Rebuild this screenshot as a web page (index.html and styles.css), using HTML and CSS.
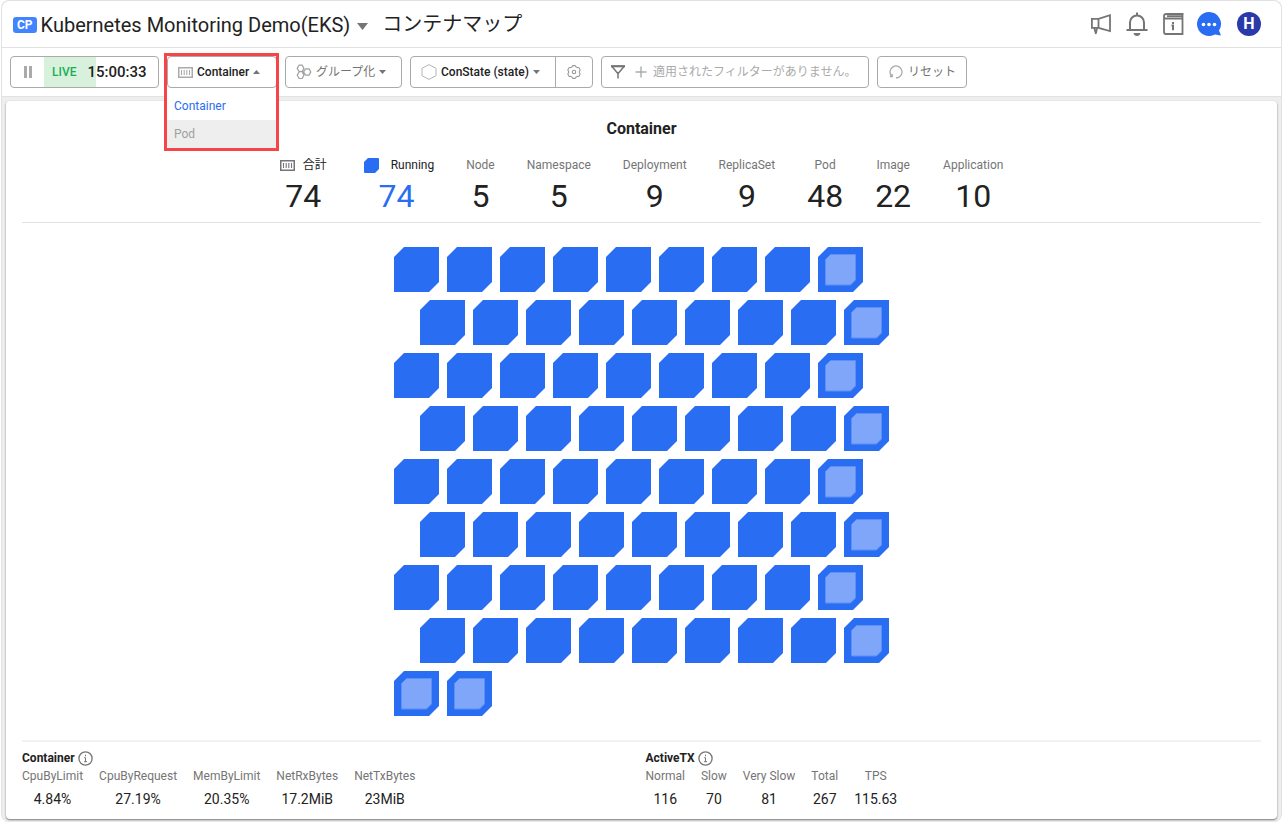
FILE: index.html
```html
<!DOCTYPE html>
<html lang="ja">
<head>
<meta charset="utf-8">
<meta name="viewport" content="width=device-width, initial-scale=1">
<title>コンテナマップ</title>
<link rel="stylesheet" href="styles.css">
</head>
<body>
<svg class="symbols" aria-hidden="true">
  <symbol id="container-icon" viewBox="0 0 15 11">
    <path d="M.75.75h13.5v9.5H.75z" fill="none" stroke="currentColor" stroke-width="1.5"/>
    <path d="M3.5 3v5M6.2 3v5M8.8 3v5M11.5 3v5" stroke="currentColor" stroke-width="1.1"/>
  </symbol>
  <symbol id="info-icon" viewBox="0 0 15 15">
    <circle cx="7.500" cy="7.500" r="6.600" fill="none" stroke="currentColor" stroke-width="1.300"/>
    <path d="M7.500 3.700v1.500M6.200 6.700h1.300v4M6 10.700h3" fill="none" stroke="currentColor"/>
  </symbol>
  <symbol id="tile" viewBox="0 0 45 45">
    <path d="M10 0h35v35L35 45H0V10z" fill="#296df2"/>
  </symbol>
  <symbol id="tile-recent" viewBox="0 0 45 45">
    <path d="M10 0h35v35L35 45H0V10z" fill="#296df2"/>
    <path d="M12.500 7.500h25v25.500l-5 5h-25V12.500z" fill="#7fa6f8" stroke="#5d8ff6" stroke-width="1"/>
  </symbol>
</svg>

<div class="window">
  <header class="topbar">
    <span class="badge">CP</span>
    <button class="project" type="button">Kubernetes Monitoring Demo(EKS)
      <svg width="11" height="7" viewBox="0 0 11 7" aria-hidden="true"><path d="M0 0h11L5.500 7z" fill="#757575"/></svg>
    </button>
    <h1 class="title">コンテナマップ</h1>
    <nav class="actions">
      <button class="icon-button" type="button" aria-label="お知らせ">
        <svg width="24" height="24" viewBox="0 0 24 24" fill="none" stroke="#757575" stroke-width="1.800"><path d="M2.900 6.900h6.600L21 3.200v15.900L9.500 15.800H2.900zM9.500 7v8.800M5.200 16l1.800 6M8 16l-1 5"/></svg>
      </button>
      <button class="icon-button" type="button" aria-label="通知">
        <svg width="24" height="24" viewBox="0 0 24 24" fill="none" stroke="#757575" stroke-width="2"><path d="M1.500 18h21M5 18v-7.500a7 7 0 0 1 14 0V18M12 .5v3"/><path d="M8.500 21h7c-.3 2-1.700 3-3.500 3s-3.200-1-3.500-3z" fill="#757575" stroke="none"/></svg>
      </button>
      <button class="icon-button" type="button" aria-label="ガイド">
        <svg width="24" height="24" viewBox="0 0 24 24" fill="none" stroke="#757575" stroke-width="1.800"><path d="M22.500 2H5.500C4 2 3 2.800 3 4.300V20a2 2 0 0 0 2 2h16.500V6.500H4.500A1.500 1.500 0 0 1 3 5M6 4.200h15.500M21.500 2v4.500"/><path d="M12 10v2M10.500 13.500H12v4.700" stroke-width="2"/></svg>
      </button>
      <button class="icon-button" type="button" aria-label="チャット">
        <svg width="24" height="24" viewBox="0 0 24 24"><path d="M12 0a12 12 0 1 0 6 22.400l6 1.200-2-5.100A12 12 0 0 0 12 0z" fill="#296df2"/><g fill="#fff"><circle cx="6.500" cy="12.500" r="1.800"/><circle cx="12" cy="12.500" r="1.800"/><circle cx="17.500" cy="12.500" r="1.800"/></g></svg>
      </button>
      <button class="avatar" type="button" aria-label="アカウント H">H</button>
    </nav>
  </header>

  <div class="toolbar">
    <div class="control live">
      <button class="pause" type="button" aria-label="一時停止">
        <svg width="8" height="12" viewBox="0 0 8 12"><path d="M0 0h3v12H0zM5 0h3v12H5z" fill="#aaa"/></svg>
      </button>
      <span class="live-label">LIVE</span>
      <time class="clock">15:00:33</time>
    </div>

    <div class="picker">
      <button class="control picker-button" type="button" aria-haspopup="listbox" aria-expanded="true">
        <svg class="light" width="15" height="11" aria-hidden="true"><use href="#container-icon"/></svg>
        Container
        <svg class="caret" width="7" height="4" viewBox="0 0 7 4" aria-hidden="true"><path d="M0 4h7L3.500 0z" fill="#757575"/></svg>
      </button>
      <ul class="picker-menu" role="listbox" aria-label="リソース">
        <li class="option selected" role="option" aria-selected="true">Container</li>
        <li class="option hovered" role="option" aria-selected="false">Pod</li>
      </ul>
      <div class="highlight"></div>
    </div>

    <button class="control group" type="button">
      <svg width="16" height="16" viewBox="0 0 16 16" fill="none" stroke="#a0a0a0" stroke-width="1.200" aria-hidden="true"><path d="M3.200 1.200h3l1.700 3-1.700 3.400h-3l-2-3.400zM3.200 7.600h3l1.700 3.600-1.700 3.300h-3l-2-3.300zM9.600 4.900h3.400l1.800 3-1.800 3.200H9.600L7.500 7.900z"/></svg>
      グループ化
      <svg class="caret" width="7" height="4" viewBox="0 0 7 4" aria-hidden="true"><path d="M0 0h7L3.500 4z" fill="#757575"/></svg>
    </button>

    <div class="control state">
      <button class="state-button" type="button">
        <svg width="16" height="16" viewBox="0 0 16 16" fill="none" stroke="#b5b5b5" aria-hidden="true"><path d="M8 .6l7 3.700v7.400l-7 3.700-7-3.700V4.300z"/></svg>
        ConState (state)
        <svg class="caret" width="7" height="4" viewBox="0 0 7 4" aria-hidden="true"><path d="M0 0h7L3.500 4z" fill="#757575"/></svg>
      </button>
      <button class="settings" type="button" aria-label="設定">
        <svg width="14" height="14" viewBox="0 0 14 14" fill="none" stroke="#999" stroke-width="1.100" stroke-linejoin="round"><path d="M5 1.900Q5.300.6 6 .6h2q.7 0 1 1.300l1.300.7q1.300-.4 1.700.2l1 1.700q.4.700-.6 1.600v1.800q1 .9.600 1.600l-1 1.700q-.4.600-1.700.2L9 12.100q-.3 1.300-1 1.300H6q-.7 0-1-1.300l-1.300-.7q-1.300.4-1.700-.2L1 9.500q-.4-.7.600-1.600V6.100Q.6 5.200 1 4.500l1-1.700q.4-.6 1.700-.2z"/><circle cx="7" cy="7" r="1.700"/></svg>
      </button>
    </div>

    <div class="control filter">
      <svg width="14" height="14" viewBox="0 0 14 14" fill="none" stroke="#757575" stroke-width="1.500" aria-hidden="true"><path d="M0 1.200h14" stroke-width="2.200"/><path d="M1 1.500l5.200 6.200h1.600L13 1.500M7 7.500V13.500" /></svg>
      <svg width="12" height="12" viewBox="0 0 12 12" stroke="#aaa" stroke-width="1.400" aria-hidden="true"><path d="M6 .5v11M.5 6h11"/></svg>
      <input class="filter-input" type="text" aria-label="フィルター" placeholder="適用されたフィルターがありません。">
    </div>

    <button class="control reset" type="button">
      <svg width="14" height="14" viewBox="0 0 14 14" fill="none" stroke="#aaa" stroke-width="1.300" aria-hidden="true"><path d="M2.800 11.300A6 6 0 1 1 7 13M.8 11.500h2.400V9"/></svg>
      リセット
    </button>
  </div>

  <main class="card">
    <h2 class="card-title">Container</h2>
    <dl class="summary">
      <div class="metric"><dt class="strong total"><svg width="15" height="11" aria-hidden="true"><use href="#container-icon"/></svg>合計</dt><dd>74</dd></div>
      <div class="metric running"><dt class="strong"><svg class="running-icon" width="15" height="15" viewBox="0 0 15 15" aria-hidden="true"><path d="M4 0h10a1 1 0 0 1 1 1v10l-4 4H1a1 1 0 0 1-1-1V4z" fill="#296df2"/></svg>Running</dt><dd>74</dd></div>
      <div class="metric"><dt>Node</dt><dd>5</dd></div>
      <div class="metric"><dt>Namespace</dt><dd>5</dd></div>
      <div class="metric"><dt>Deployment</dt><dd>9</dd></div>
      <div class="metric"><dt>ReplicaSet</dt><dd>9</dd></div>
      <div class="metric"><dt>Pod</dt><dd>48</dd></div>
      <div class="metric"><dt>Image</dt><dd>22</dd></div>
      <div class="metric"><dt>Application</dt><dd>10</dd></div>
    </dl>

    <section class="map" aria-label="コンテナマップ"><div class="tiles" id="tiles"></div></section>

    <footer class="stats">
      <section>
        <h3 class="stats-title">Container <svg width="15" height="15" aria-hidden="true"><use href="#info-icon"/></svg></h3>
        <dl class="stats-list">
          <div class="stat"><dt>CpuByLimit</dt><dd>4.84%</dd></div>
          <div class="stat"><dt>CpuByRequest</dt><dd>27.19%</dd></div>
          <div class="stat"><dt>MemByLimit</dt><dd>20.35%</dd></div>
          <div class="stat"><dt>NetRxBytes</dt><dd>17.2MiB</dd></div>
          <div class="stat"><dt>NetTxBytes</dt><dd>23MiB</dd></div>
        </dl>
      </section>
      <section>
        <h3 class="stats-title">ActiveTX <svg width="15" height="15" aria-hidden="true"><use href="#info-icon"/></svg></h3>
        <dl class="stats-list">
          <div class="stat"><dt>Normal</dt><dd>116</dd></div>
          <div class="stat"><dt>Slow</dt><dd>70</dd></div>
          <div class="stat"><dt>Very Slow</dt><dd>81</dd></div>
          <div class="stat"><dt>Total</dt><dd>267</dd></div>
          <div class="stat"><dt>TPS</dt><dd>115.63</dd></div>
        </dl>
      </section>
    </footer>
  </main>
</div>
<script src="map.js"></script>
</body>
</html>
```

FILE: styles.css
```css
* {
  box-sizing: border-box;
}

body {
  margin: 0;
  background: #fff;
  color: #222;
  font-family: Roboto, "Noto Sans CJK JP", sans-serif;
  font-size: 12px;
  line-height: 16px;
}

h1, h2, h3, dl, dd, ul {
  margin: 0;
  padding: 0;
}

button, input {
  margin: 0;
  padding: 0;
  border: 0;
  background: none;
  color: inherit;
  font: inherit;
}

svg {
  display: block;
  flex: none;
}

.symbols {
  position: absolute;
  width: 0;
  height: 0;
}

.window {
  display: flex;
  flex-direction: column;
  min-height: 100vh;
  margin-left: 1px;
  border: 1px solid #e2e2e2;
  border-bottom: 0;
  border-radius: 8px;
  background: #eee;
}

/* Header */
.topbar {
  display: flex;
  align-items: center;
  height: 47px;
  padding: 0 20px 0 11px;
  border-bottom: 1px solid #e2e2e2;
  border-radius: 8px 8px 0 0;
  background: #fff;
}

.badge {
  margin-top: 2px;
  padding: 0 4px;
  border-radius: 3px;
  background: #4284ff;
  color: #fff;
  font-weight: 700;
  font-size: 12px;
}

.project {
  display: flex;
  align-items: center;
  gap: 7px;
  margin-left: 4px;
  padding-top: 1px;
  font-size: 20px;
  line-height: 24px;
}

.project svg {
  margin-top: 4px;
}

.title {
  margin-left: 14px;
  font-size: 20px;
  font-weight: 400;
  line-height: 24px;
}

.actions {
  display: flex;
  gap: 12px;
  margin-left: auto;
}

.icon-button {
  width: 24px;
  height: 24px;
}

.avatar {
  width: 24px;
  height: 24px;
  margin-left: 4px;
  border-radius: 50%;
  background: #2a3aa8;
  color: #fff;
  font-size: 16px;
  font-weight: 700;
}

/* Toolbar */
.toolbar {
  display: flex;
  gap: 8px;
  padding: 8px;
  border-bottom: 1px solid #e2e2e2;
  background: #fff;
}

.control {
  display: flex;
  align-items: center;
  height: 32px;
  border: 1px solid #aaa;
  border-radius: 4px;
  background: #fff;
  white-space: nowrap;
}

.live {
  width: 149px;
  background: linear-gradient(#d8f1dc, #d8f1dc) 33px 0 / 52px 100% no-repeat;
}

.pause {
  display: flex;
  justify-content: center;
  width: 33px;
}

.live-label {
  margin-left: 8px;
  color: #15b055;
  font-weight: 500;
}

.clock {
  margin-left: 11px;
  font-size: 15px;
  font-weight: 500;
}

.picker {
  position: relative;
}

.picker-button {
  width: 110px;
  padding-left: 10px;
  gap: 4px;
  font-weight: 500;
}

.light {
  color: #aaa;
}

.picker-menu {
  position: absolute;
  top: 36px;
  left: 0;
  right: 0;
  z-index: 1;
  border-radius: 4px;
  background: #fff;
  list-style: none;
  overflow: hidden;
}

.option {
  padding: 6px 7px;
}

.selected {
  color: #296df2;
}

.hovered {
  background: #eee;
  color: #a0a0a0;
}

.highlight {
  position: absolute;
  inset: -3px -2px auto -3px;
  z-index: 2;
  height: 98px;
  border: 3px solid #f64549;
  pointer-events: none;
}

.group {
  width: 117px;
  padding-left: 10px;
  gap: 4px;
  color: #757575;
}

.state {
  width: 183px;
}

.state-button {
  display: flex;
  align-items: center;
  flex: 1;
  gap: 4px;
  padding-left: 10px;
  font-weight: 500;
}

.settings {
  display: flex;
  align-items: center;
  justify-content: center;
  width: 37px;
  height: 100%;
  border-left: 1px solid #aaa;
}

.filter {
  width: 268px;
  padding: 0 12px 0 9px;
}

.filter svg + svg {
  margin: 0 6px 0 10px;
}

.filter-input {
  flex: 1;
  min-width: 0;
}

.filter-input::placeholder {
  color: #aaa;
  opacity: 1;
}

.reset {
  width: 90px;
  padding-left: 11px;
  gap: 5px;
  color: #757575;
}

/* Card */
.card {
  display: flex;
  flex: 1;
  flex-direction: column;
  margin: 4px 4px 3px;
  padding: 0 16px;
  border-radius: 4px;
  background: #fff;
  box-shadow: 0 1px 2px rgba(0, 0, 0, 0.5);
}

.card-title {
  padding-top: 18px;
  font-size: 16px;
  font-weight: 700;
  line-height: 20px;
  text-align: center;
}

.summary {
  display: flex;
  justify-content: center;
  gap: 32px;
  padding: 18px 0 3px;
  border-bottom: 1px solid #e2e2e2;
}

.metric {
  text-align: center;
}

.metric dt {
  display: flex;
  align-items: center;
  justify-content: center;
  color: #757575;
}

.metric .strong {
  color: #222;
}

.total svg {
  margin-right: 8px;
  color: #757575;
}

.running {
  padding-left: 5px;
}

.running-icon {
  margin-right: 12px;
}

.metric dd {
  font-size: 32px;
  line-height: 46px;
}

.running dd {
  padding-right: 5px;
  color: #296df2;
}

.map {
  display: flex;
  flex: 1;
  align-items: center;
  justify-content: center;
}

.tiles, .tile-row {
  display: flex;
  gap: 8px;
}

.tiles {
  flex-direction: column;
}

.tile-row:nth-child(even) {
  padding-left: 26px;
}

/* Bottom statistics */
.stats {
  display: grid;
  grid-template-columns: 1fr 1fr;
  gap: 8px;
  padding: 8px 0 11px;
  border-top: 2px solid #f2f2f2;
}

.stats-title {
  display: flex;
  align-items: center;
  gap: 3px;
  font-size: 12px;
  font-weight: 700;
}

.stats-title svg {
  color: #757575;
}

.stats-list {
  display: flex;
  gap: 16px;
  padding-top: 2px;
}

.stat {
  text-align: center;
}

.stat dt {
  color: #757575;
}

.stat dd {
  padding-top: 6px;
  font-size: 14px;
  line-height: 18px;
}
```

FILE: map.js
```js
// Draws one tile for each container, nine to a row.
const SVG = "http://www.w3.org/2000/svg";
const total = 74;
const perRow = 9;
const map = document.getElementById("tiles");

for (let start = 0; start < total; start += perRow) {
  const row = document.createElement("div");
  row.className = "tile-row";
  for (let i = start; i < Math.min(start + perRow, total); i++) {
    const recent = i % perRow === perRow - 1 || i >= 72;
    const svg = document.createElementNS(SVG, "svg");
    svg.setAttribute("width", "45");
    svg.setAttribute("height", "45");
    const use = document.createElementNS(SVG, "use");
    use.setAttribute("href", recent ? "#tile-recent" : "#tile");
    svg.append(use);
    row.append(svg);
  }
  map.append(row);
}
```
